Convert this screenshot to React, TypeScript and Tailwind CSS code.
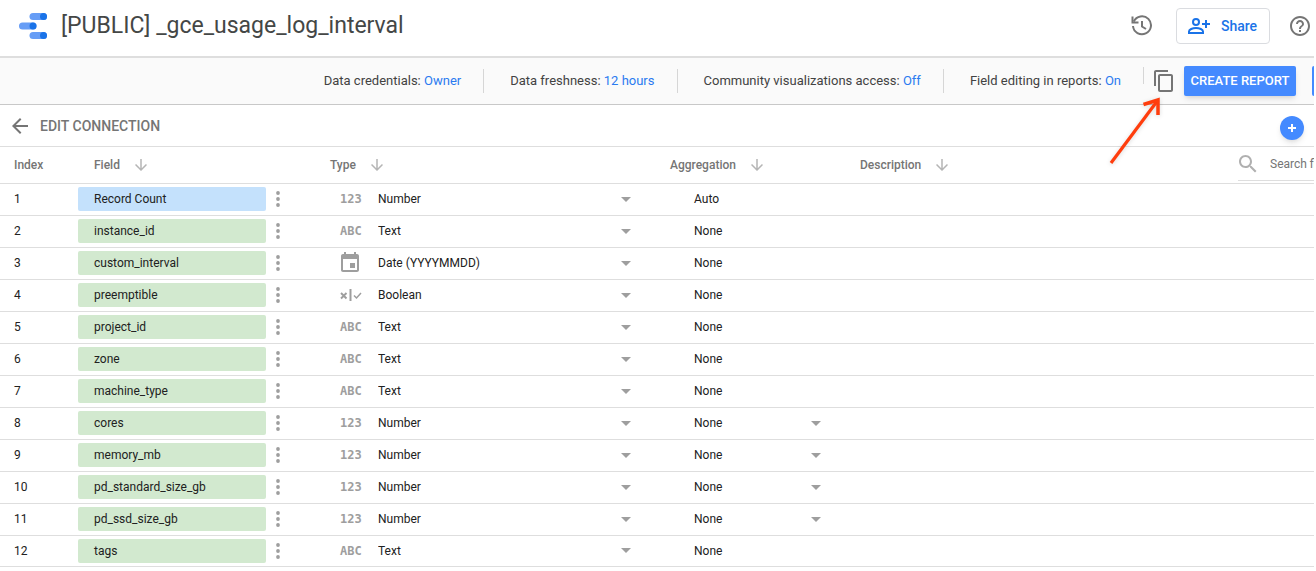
type Kind = "number" | "text" | "date" | "boolean";

interface Field {
  name: string;
  kind: Kind;
  aggregation: string;
  editable?: boolean;
}

const FIELDS: Field[] = [
  { name: "Record Count", kind: "number", aggregation: "Auto" },
  { name: "instance_id", kind: "text", aggregation: "None" },
  { name: "custom_interval", kind: "date", aggregation: "None" },
  { name: "preemptible", kind: "boolean", aggregation: "None" },
  { name: "project_id", kind: "text", aggregation: "None" },
  { name: "zone", kind: "text", aggregation: "None" },
  { name: "machine_type", kind: "text", aggregation: "None" },
  { name: "cores", kind: "number", aggregation: "None", editable: true },
  { name: "memory_mb", kind: "number", aggregation: "None", editable: true },
  { name: "pd_standard_size_gb", kind: "number", aggregation: "None", editable: true },
  { name: "pd_ssd_size_gb", kind: "number", aggregation: "None", editable: true },
  { name: "tags", kind: "text", aggregation: "None" },
];

const TYPE_LABEL: Record<Kind, string> = {
  number: "Number",
  text: "Text",
  date: "Date (YYYYMMDD)",
  boolean: "Boolean",
};

const SETTINGS = [
  { label: "Data credentials:", value: "Owner" },
  { label: "Data freshness:", value: "12 hours" },
  { label: "Community visualizations access:", value: "Off" },
  { label: "Field editing in reports:", value: "On" },
];

function Icon({ d, className }: { d: string; className: string }) {
  return (
    <svg viewBox="0 0 24 24" fill="currentColor" aria-hidden="true" className={className}>
      <path d={d} />
    </svg>
  );
}

const ARROW_DOWN = "M20 12l-1.41-1.41L13 16.17V4h-2v12.17l-5.58-5.59L4 12l8 8 8-8z";
const ARROW_BACK = "M20 11H7.83l5.59-5.59L12 4l-8 8 8 8 1.41-1.41L7.83 13H20v-2z";
const COPY =
  "M16 1H4c-1.1 0-2 .9-2 2v14h2V3h12V1zm3 4H8c-1.1 0-2 .9-2 2v14c0 1.1.9 2 2 2h11c1.1 0 2-.9 2-2V7c0-1.100-.9-2-2-2zm0 16H8V7h11v14z";
const HELP =
  "M11 18h2v-2h-2v2zm1-16C6.480 2 2 6.480 2 12s4.480 10 10 10 10-4.480 10-10S17.520 2 12 2zm0 18c-4.410 0-8-3.590-8-8s3.590-8 8-8 8 3.590 8 8-3.590 8-8 8zm0-14c-2.210 0-4 1.790-4 4h2c0-1.100.9-2 2-2s2 .9 2 2c0 2-3 1.750-3 5h2c0-2.250 3-2.500 3-5 0-2.210-1.790-4-4-4z";
const SEARCH =
  "M15.500 14h-.79l-.28-.27C15.410 12.590 16 11.110 16 9.500 16 5.910 13.090 3 9.500 3S3 5.910 3 9.500 5.910 16 9.500 16c1.610 0 3.090-.59 4.230-1.570l.27.28v.79l5 4.990L20.490 19l-4.990-5zm-6 0C7.010 14 5 11.990 5 9.500S7.010 5 9.500 5 14 7.010 14 9.500 11.990 14 9.500 14z";
const EVENT =
  "M17 12h-5v5h5v-5zM16 1v2H8V1H6v2H5c-1.110 0-1.990.9-1.990 2L3 19c0 1.100.89 2 2 2h14c1.100 0 2-.9 2-2V5c0-1.100-.9-2-2-2h-1V1h-2zm3 18H5V8h14v11z";

function Logo() {
  return (
    <svg viewBox="0 0 28 26" className="h-[26px] w-7 shrink-0" aria-hidden="true">
      <g fill="#669df6">
        <rect x="10.500" y="0" width="17.500" height="7" rx="3.500" />
        <rect x="0" y="9.500" width="17.500" height="7" rx="3.500" />
        <rect x="10.500" y="19" width="17.500" height="7" rx="3.500" />
      </g>
      <g fill="#1a73e8">
        <circle cx="24.500" cy="3.500" r="3.500" />
        <circle cx="14" cy="13" r="3.500" />
        <circle cx="24.500" cy="22.500" r="3.500" />
      </g>
    </svg>
  );
}

function HistoryIcon() {
  return (
    <svg viewBox="0 0 22 22" className="size-[22px]" fill="none" stroke="currentColor" strokeWidth="2" aria-hidden="true">
      <path d="M2.800 6.500A9 9 0 1 1 2 11" />
      <path d="M1.500 1.500v6h6" />
      <path d="M11 6v5.500l4 2.500" />
    </svg>
  );
}

function AddPersonIcon() {
  return (
    <svg viewBox="0 0 22 16" className="h-4 w-[22px]" fill="none" stroke="currentColor" strokeWidth="2" aria-hidden="true">
      <circle cx="8" cy="4" r="3" />
      <path d="M1 15v-1.500C1 11.500 4.500 10 8 10s7 1.500 7 3.500V15z" />
      <path d="M18 2v8M14 6h8" />
    </svg>
  );
}

function TypeIcon({ kind }: { kind: Kind }) {
  if (kind === "date") return <Icon d={EVENT} className="-ml-0.5 size-6" />;
  if (kind === "boolean")
    return (
      <svg viewBox="0 0 22 12" className="h-3 w-[22px]" fill="none" stroke="currentColor" aria-hidden="true">
        <path d="M1 4l5.500 5.500M6.500 4L1 9.500" strokeWidth="1.900" />
        <path d="M10.500 0v12" strokeWidth="2" />
        <path d="M14 6.500l2.500 2.500 4.500-5" strokeWidth="1.500" />
      </svg>
    );
  return (
    <span className="font-['DejaVu_Sans_Mono',monospace] text-xs font-bold">
      {kind === "number" ? "123" : "ABC"}
    </span>
  );
}

function Dropdown({ label, value }: { label: string; value: string }) {
  return (
    <span className="flex flex-1 items-center">
      <select aria-label={label} className="h-6 flex-1 appearance-none bg-transparent text-xs outline-none">
        <option>{value}</option>
      </select>
      <svg viewBox="0 0 10 5" className="h-[5px] w-2.5 shrink-0 text-[#9e9e9e]" fill="currentColor" aria-hidden="true">
        <path d="M0 0h10L5 5z" />
      </svg>
    </span>
  );
}

function SortHeader({ children }: { children: string }) {
  return (
    <th className="p-0 text-left font-medium">
      <button className="flex items-center gap-3 pl-4">
        {children}
        <Icon d={ARROW_DOWN} className="size-[18px] text-[#b5b5b5]" />
      </button>
    </th>
  );
}

function FieldRow({ field, index }: { field: Field; index: number }) {
  return (
    <tr className="h-8 border-b border-[#dedede] last:h-[31px]">
      <td className="p-0 pl-3.5">{index}</td>
      <td className="p-0">
        <div className="flex items-center gap-[9px]">
          <span
            className={`flex h-6 w-[188px] items-center rounded-xs pl-4 ${
              index === 1 ? "bg-[#c4e1fc]" : "bg-[#d2e9cf]"
            }`}
          >
            {field.name}
          </span>
          <button aria-label={`Options for ${field.name}`} className="text-[#9e9e9e]">
            <svg viewBox="0 0 6 16" className="h-4 w-1.5" fill="currentColor" aria-hidden="true">
              <circle cx="3" cy="2" r="1.900" />
              <circle cx="3" cy="8" r="1.900" />
              <circle cx="3" cy="14" r="1.900" />
            </svg>
          </button>
        </div>
      </td>
      <td className="p-0">
        <div className="flex items-center pr-[23px] pl-[26px]">
          <span className="flex w-[38px] text-[#9e9e9e]">
            <TypeIcon kind={field.kind} />
          </span>
          <Dropdown label={`Type of ${field.name}`} value={TYPE_LABEL[field.kind]} />
        </div>
      </td>
      <td className="p-0">
        <div className="flex items-center pr-[23px] pl-10">
          {field.editable ? (
            <Dropdown label={`Aggregation of ${field.name}`} value={field.aggregation} />
          ) : (
            field.aggregation
          )}
        </div>
      </td>
      <td className="p-0" />
      <td className="p-0" />
    </tr>
  );
}

export default function App() {
  return (
    <div className="relative overflow-hidden bg-white pr-0.5 font-[Roboto,sans-serif] text-xs text-[#212121]">
      <header className="flex h-[58px] items-center border-b-2 border-[#dedede] pr-0.5 pb-1 pl-[19px] whitespace-nowrap">
        <Logo />
        <h1 className="ml-3.5 text-[23px] text-[#444746]">[PUBLIC] _gce_usage_log_interval</h1>
        <button aria-label="Version history" className="ml-auto text-[#757575]">
          <HistoryIcon />
        </button>
        <button className="ml-[23px] flex h-9 w-[94px] items-center gap-[11px] rounded border border-[#dadce0] pl-[11px] text-sm font-medium text-[#1a73e8]">
          <AddPersonIcon />
          Share
        </button>
        <button aria-label="Help" className="ml-[18px] text-[#757575]">
          <Icon d={HELP} className="size-6" />
        </button>
      </header>

      <div className="flex h-[47px] items-center justify-end border-b border-[#c8c8c8] bg-[#fafafa] text-[13px] whitespace-nowrap text-[#424242]">
        {SETTINGS.map((s, i) => (
          <div key={s.label} className="flex items-center">
            {i > 0 && <span className="mr-[26px] ml-[22px] h-6 w-px bg-[#d6d6d6]" />}
            <span>
              {s.label}{" "}
              <a href="#" className="text-[#2a7af0]">
                {s.value}
              </a>
            </span>
          </div>
        ))}
        <span className="mr-2 mb-3 ml-[22px] h-[17px] w-px bg-[#d6d6d6]" />
        <button aria-label="Make a copy of this data source" className="text-[#757575]">
          <Icon d={COPY} className="size-6" />
        </button>
        <button className="ml-2 h-[30px] w-28 rounded-xs bg-[#448aff] font-medium text-white shadow-md">
          CREATE REPORT
        </button>
        <button aria-label="Explore" className="ml-4 h-[30px] w-0.5 rounded-l-xs bg-[#448aff]" />
      </div>

      <div className="flex h-[42px] items-center border-b border-[#dedede] pl-2">
        <button className="flex items-center gap-2 text-sm font-medium text-[#757575]">
          <Icon d={ARROW_BACK} className="size-6" />
          EDIT CONNECTION
        </button>
        <button
          aria-label="Add a field"
          className="mt-1 mr-2.5 ml-auto flex size-6 items-center justify-center rounded-full bg-[#448aff] text-white shadow-md"
        >
          <svg viewBox="0 0 8 8" className="size-2" stroke="currentColor" strokeWidth="2" aria-hidden="true">
            <path d="M4 0v8M0 4h8" />
          </svg>
        </button>
      </div>

      <table className="w-full table-fixed border-collapse">
        <colgroup>
          <col className="w-[78px]" />
          <col className="w-[236px]" />
          <col className="w-[340px]" />
          <col className="w-[190px]" />
          <col />
          <col className="w-[76px]" />
        </colgroup>
        <thead>
          <tr className="h-9 border-b border-[#dedede] text-[#757575]">
            <th className="p-0 pl-3.5 text-left font-medium">Index</th>
            <SortHeader>Field</SortHeader>
            <SortHeader>Type</SortHeader>
            <SortHeader>Aggregation</SortHeader>
            <SortHeader>Description</SortHeader>
            <th className="p-0 pb-0.5 align-bottom font-normal">
              <label className="flex h-8 items-center gap-2.5 border-b border-[#dedede] text-[#b0b0b0]">
                <Icon d={SEARCH} className="-ml-0.5 size-6 shrink-0" />
                <input
                  aria-label="Search fields"
                  placeholder="Search fields"
                  className="w-full min-w-0 flex-1 bg-transparent outline-none placeholder:text-[#757575]"
                />
              </label>
            </th>
          </tr>
        </thead>
        <tbody>
          {FIELDS.map((f, i) => (
            <FieldRow key={f.name} field={f} index={i + 1} />
          ))}
        </tbody>
      </table>

      <svg
        viewBox="0 0 54 70"
        className="pointer-events-none absolute top-[96px] right-[154px] h-[70px] w-[54px] drop-shadow-sm"
        fill="none"
        stroke="#ff3d0d"
        strokeWidth="3.200"
        aria-hidden="true"
      >
        <path d="M3 67L50 4" />
        <path d="M35.500 8.500L50 4V19" strokeWidth="3.500" />
      </svg>
    </div>
  );
}
